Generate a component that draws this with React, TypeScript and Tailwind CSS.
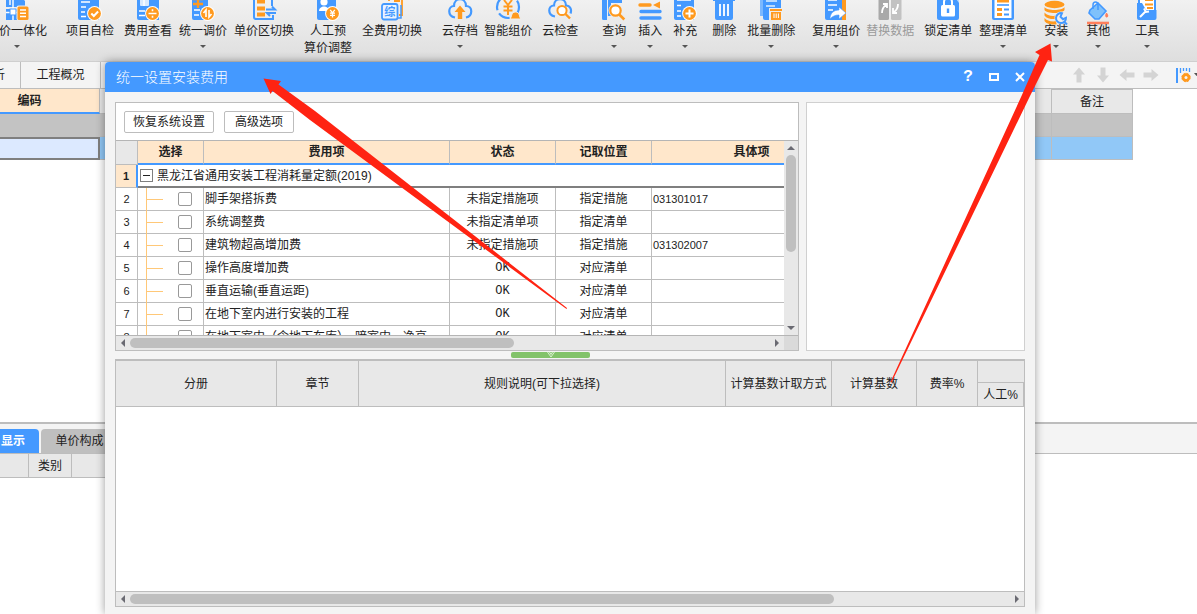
import React from 'react';

const BLUE = '#4499ff';
const ORANGE = '#ff9a1f';

function Badge({ children }: { children: React.ReactNode }) {
  return (
    <g>
      <circle cx="16.5" cy="17.5" r="7.4" fill="#fff" />
      <circle cx="16.5" cy="17.5" r="6.4" fill={ORANGE} />
      <g stroke="#fff" strokeWidth="1.6" fill="none">{children}</g>
    </g>
  );
}

const yen = 'M14.2 13.8l2.3 3 2.3-3M16.5 16.8v4.6M14 17.2h5M14 19.3h5';

const icons: Record<string, React.ReactNode> = {
  integrate: (
    <>
      <path d="M1 0h14l5 5v6H1z M1 13h15v11H1z" fill={BLUE} />
      <path d="M5 0v9M8 0v24M1 16.500h14" stroke="#fff" strokeWidth="1.400" />
      <rect x="4.500" y="12.500" width="7" height="7" fill={BLUE} />
      <rect x="5.500" y="13.500" width="5" height="5" fill="#fff" />
      <rect x="11.500" y="9.500" width="12.500" height="15" rx="2" fill="#eee" />
      <rect x="12.500" y="10.500" width="11" height="13.500" rx="1.500" fill={ORANGE} />
      <path d="M15 14h6M15 17.300h6M15 20.600h6" stroke="#fff" strokeWidth="1.500" />
    </>
  ),
  check: (
    <>
      <path d="M0 0h21v24H2a2 2 0 0 1-2-2z" fill={BLUE} />
      <path d="M3 6h9M3 11h5M3 16h4M3 20.500h5" stroke="#fff" strokeWidth="1.700" />
      <Badge><path d="M13.300 17.500l2.500 2.500 4.300-4.500" strokeWidth="2" /></Badge>
    </>
  ),
  fee: (
    <>
      <path d="M1 0h22v24H3a2 2 0 0 1-2-2z" fill={BLUE} />
      <rect x="4" y="0" width="9" height="10" rx="1" fill="#d8eaff" />
      <path d="M8 0v10M3 15h6M3 19.500h6" stroke="#fff" strokeWidth="1.500" />
      <Badge><path d="M12.500 17.500h8M16.500 13.300v2M16.500 19.700v2" /></Badge>
    </>
  ),
  adjust: (
    <>
      <path d="M1 0h16v24H3a2 2 0 0 1-2-2z" fill={BLUE} />
      <path d="M3 14h6M3 19h5" stroke="#fff" strokeWidth="1.500" />
      <path d="M2 3h10M2 8h10M7 0v12" stroke={ORANGE} strokeWidth="2.300" />
      <Badge><path d="M15 21v-7l-2.500 3M18 14v7l2.500-3" /></Badge>
    </>
  ),
  swapZone: (
    <>
      <path d="M2 0v21a2 2 0 0 0 2 2h17v-4M20 0v10" fill="none" stroke={BLUE} strokeWidth="2" />
      <path d="M5 5.500h8M5 12.500h8M5 18.500h8" stroke={ORANGE} strokeWidth="4" />
      <path d="M14 13.500h9l-3-3M24 17h-9l3 3" stroke={BLUE} strokeWidth="2" fill="none" />
    </>
  ),
  worker: (
    <>
      <path d="M1 0h19v24H3a2 2 0 0 1-2-2z" fill={BLUE} />
      <circle cx="8" cy="6" r="3.600" fill="#fff" />
      <path d="M3 15c0-6 10-6 10 0z" fill="#fff" />
      <Badge><path d={yen} strokeWidth="1.300" /></Badge>
    </>
  ),
  full: (
    <>
      <path d="M9 5V1h13v18h-3M14 5h6" fill="none" stroke={ORANGE} strokeWidth="1.800" />
      <path d="M21 9v13h-3" fill="none" stroke={BLUE} strokeWidth="1.500" />
      <rect x="2" y="8" width="15.500" height="15.500" rx="2" fill="#e9f3ff" stroke={BLUE} strokeWidth="1.800" />
      <text x="9.800" y="20" textAnchor="middle" fontSize="11" fontWeight="bold" fill={BLUE}>综</text>
    </>
  ),
  upload: (
    <>
      <path d="M7 21.500C-1 20 0 10 6 10 6 1 18 1 18 10c7 0 7 10 0 11.500" fill="none" stroke={BLUE} strokeWidth="2.200" />
      <path d="M12 9.500l5.500 6.500h-3.300v7H9.800v-7H6.500z" fill={ORANGE} />
    </>
  ),
  smart: (
    <>
      <circle cx="12" cy="11" r="11" fill="none" stroke={BLUE} strokeWidth="2.200" strokeDasharray="12 3.500" />
      <path d="M8 4l4 5 4-5M12 9v10M7.500 10.500h9M7.500 14.500h9" fill="none" stroke={ORANGE} strokeWidth="2" />
      <path d="M14 23c2-2 1-7 5.500-7s3.500 5 5.500 7z" fill={ORANGE} stroke="#eee" />
    </>
  ),
  cloudCheck: (
    <>
      <path d="M7 20.500C-1 19 0 9.500 6 9.500 6 1 18 1 18 9.500c4 0 6 4 4.500 8" fill="none" stroke={BLUE} strokeWidth="2.200" />
      <circle cx="14" cy="14.500" r="4.600" fill="#fff" stroke={ORANGE} strokeWidth="2" />
      <path d="M17.500 18l4.500 4.500" stroke={ORANGE} strokeWidth="2.400" />
    </>
  ),
  query: (
    <>
      <path d="M0 0h5v24H1.500A1.500 1.500 0 0 1 0 22.500zM6 0h14v7H9v13H6z" fill={BLUE} />
      <circle cx="13.500" cy="14.500" r="7" fill="#f0f0f0" />
      <circle cx="13.500" cy="14.500" r="5.200" fill="#fff" stroke={ORANGE} strokeWidth="2.200" />
      <path d="M17.300 18.500l5 5" stroke={ORANGE} strokeWidth="2.600" />
    </>
  ),
  insert: (
    <>
      <path d="M2 9h10" stroke={ORANGE} strokeWidth="3.400" strokeLinecap="round" />
      <path d="M15 9l7-3.500v7z" fill={ORANGE} />
      <path d="M3 15.500h19M3 22h19" stroke={BLUE} strokeWidth="3.400" strokeLinecap="round" />
    </>
  ),
  add: (
    <>
      <path d="M1 0h20v24H3a2 2 0 0 1-2-2z" fill={BLUE} />
      <path d="M4 4h14M4 9.500h4M4 15h4M4 20h4" stroke="#fff" strokeWidth="1.700" />
      <Badge><path d="M12.500 17.500h8M16.500 13.500v8" strokeWidth="2" /></Badge>
    </>
  ),
  trash: (
    <>
      <path d="M1 2h22v3H1zM3 4h18v18a2 2 0 0 1-2 2H5a2 2 0 0 1-2-2z" fill={BLUE} />
      <path d="M8 8v12M12 8v12M16 8v12" stroke="#fff" strokeWidth="1.800" />
    </>
  ),
  batchTrash: (
    <>
      <path d="M1 0h12v20H1z" fill="#7bb8ff" />
      <path d="M4 0h18v24H6a2 2 0 0 1-2-2z" fill={BLUE} />
      <path d="M7 5h11M7 10h9" stroke="#b9dbff" strokeWidth="1.800" />
      <path d="M10 12h14v12H10z" fill="#eee" />
      <path d="M11 13h12v2H11zM12 16h10v8H12z" fill={ORANGE} />
      <path d="M15 17.500v4.500M17.200 17.500v4.500M19.400 17.500v4.500" stroke="#fff" />
    </>
  ),
  reuse: (
    <>
      <path d="M14 0h8v24H9z" fill={ORANGE} />
      <path d="M1 0h17v24H3a2 2 0 0 1-2-2z" fill={BLUE} />
      <path d="M4 4h9M4 9h9M4 14h5" stroke="#fff" strokeWidth="1.700" />
      <path d="M6 23c0-6 4-9 9-9v-3l7 6-7 6v-4c-4 0-6 1-9 4z" fill="#fff" stroke={BLUE} strokeWidth=".6" />
    </>
  ),
  replace: (
    <>
      <rect x="0.500" y="-2" width="10.500" height="26" rx="1.500" fill="#a9a9a9" />
      <rect x="13" y="-2" width="10.500" height="26" rx="1.500" fill="#c2c2c2" />
      <path d="M4 17c0-4 1-6 4-8M5 8h4v4M20 8c0 4-1 6-4 8M15 12v5h4" fill="none" stroke="#fff" strokeWidth="1.800" />
    </>
  ),
  lock: (
    <>
      <path d="M1 0h22v22a2 2 0 0 1-2 2H3a2 2 0 0 1-2-2z" fill={BLUE} />
      <path d="M18 0h5v7z" fill="#b9dbff" />
      <rect x="5" y="9" width="14" height="11.500" rx="1.500" fill="#fff" />
      <path d="M8 9V6c0-5 8-5 8 0v3" fill="none" stroke="#fff" strokeWidth="2" />
      <path d="M12 12.500v4.500" stroke={BLUE} strokeWidth="2.400" />
    </>
  ),
  list: (
    <>
      <path d="M1 0h22v22a2 2 0 0 1-2 2H3a2 2 0 0 1-2-2z" fill={BLUE} />
      <path d="M3.500 0h17v22h-17z" fill="#fff" />
      <path d="M6 9h12" stroke={BLUE} strokeWidth="1.600" />
      <path d="M6 5h12M6 13.500h5M6 18.500h5" stroke={ORANGE} strokeWidth="3" />
      <path d="M13 13.500h5M13 18.500h5" stroke={BLUE} strokeWidth="2" />
    </>
  ),
  install: (
    <>
      <ellipse cx="10.500" cy="8.500" rx="10" ry="3.700" fill={ORANGE} />
      <path d="M.5 11c2 4 18 4 20 0v3c-2 4-18 4-20 0zM.5 16.500c2 3 8 4 12 3v3.500c-5 .5-10-.5-12-3.500zM.5 22c2 3 8 4 12 3v3.500c-5 .5-10-.5-12-3.500z" fill={ORANGE} />
      <circle cx="17" cy="22" r="6.500" fill="#f0f0f0" />
      <path d="M18 17.200a5 5 0 1 0 4 4.500l-3 1.500-2.500-2.500zM20.500 26l2.500 2.500" fill="none" stroke={BLUE} strokeWidth="2" />
    </>
  ),
  other: (
    <>
      <path d="M4 14L12 7l8 8-7 8H9l-6-6z" fill="#7fc1fb" stroke={BLUE} strokeWidth="1.600" />
      <path d="M7 13V9c0-4 5-4 5 0v5" fill="none" stroke={BLUE} strokeWidth="1.500" />
      <path d="M20.500 17c4 5-3 6 0 0z" fill="#ff7f5c" stroke="#ff7f5c" />
      <path d="M1 27h22" stroke="#ff7f5c" strokeWidth="2.600" />
    </>
  ),
  tool: (
    <>
      <path d="M4 0h16v15H4z" fill="#fff" stroke={BLUE} strokeWidth="2" />
      <path d="M10 4h8M10 8.500h8M12 12h6" stroke={ORANGE} strokeWidth="2.200" />
      <path d="M2 7h5l4 7h10.500V22a2 2 0 0 1-2 2H4a2 2 0 0 1-2-2z" fill={BLUE} />
      <path d="M5 21l5-5M9 12.500l2 3.500 3-.5" stroke="#fff" strokeWidth="2" fill="none" />
    </>
  ),
};

type Tool = { icon: string; label: string; second?: string; gap: string; menu?: boolean; disabled?: boolean };

const tools: Tool[] = [
  { icon: 'integrate', label: '价一体化', gap: '-ml-[13px]', menu: true },
  { icon: 'check', label: '项目自检', gap: 'ml-[19px]' },
  { icon: 'fee', label: '费用查看', gap: 'ml-[10px]' },
  { icon: 'adjust', label: '统一调价', gap: 'ml-[7px]', menu: true },
  { icon: 'swapZone', label: '单价区切换', gap: 'ml-[7px]' },
  { icon: 'worker', label: '人工预', second: '算价调整', gap: 'ml-[10px]' },
  { icon: 'full', label: '全费用切换', gap: 'ml-[10px]' },
  { icon: 'upload', label: '云存档', gap: 'ml-[20px]', menu: true },
  { icon: 'smart', label: '智能组价', gap: 'ml-[6px]' },
  { icon: 'cloudCheck', label: '云检查', gap: 'ml-[10px]' },
  { icon: 'query', label: '查询', gap: 'ml-[24px]', menu: true },
  { icon: 'insert', label: '插入', gap: 'ml-[12px]', menu: true },
  { icon: 'add', label: '补充', gap: 'ml-[11px]', menu: true },
  { icon: 'trash', label: '删除', gap: 'ml-[15px]' },
  { icon: 'batchTrash', label: '批量删除', gap: 'ml-[11px]', menu: true },
  { icon: 'reuse', label: '复用组价', gap: 'ml-[17px]', menu: true },
  { icon: 'replace', label: '替换数据', gap: 'ml-[6px]', disabled: true },
  { icon: 'lock', label: '锁定清单', gap: 'ml-[10px]' },
  { icon: 'list', label: '整理清单', gap: 'ml-[7px]', menu: true },
  { icon: 'install', label: '安装', gap: 'ml-[17px]', menu: true },
  { icon: 'other', label: '其他', gap: 'ml-[18px]', menu: true },
  { icon: 'tool', label: '工具', gap: 'ml-[25px]', menu: true },
];

function Ribbon() {
  return (
    <header className="flex h-[62px] shrink-0 items-start overflow-hidden border-b border-[#cfcfcf] bg-linear-to-b from-[#f1f1f1] to-[#dedede]">
      {tools.map((t) => (
        <button
          key={t.label}
          disabled={t.disabled}
          className={`-mt-1 flex shrink-0 flex-col items-center whitespace-nowrap text-xs leading-[17px] ${t.gap} ${t.disabled ? 'text-[#9a9a9a]' : 'text-[#222]'}`}
        >
          <svg viewBox="0 0 24 24" className="mb-[3px] size-6 overflow-visible" aria-hidden="true">{icons[t.icon]}</svg>
          <span className={t.icon === 'integrate' ? 'pl-3' : ''}>{t.label}</span>
          {t.second && <span>{t.second}</span>}
          {t.menu && (
            <svg viewBox="0 0 6 3" className="mt-[5px] h-[3px] w-[6px]" aria-hidden="true"><path d="M0 0h6L3 3z" fill="#555" /></svg>
          )}
        </button>
      ))}
    </header>
  );
}

function MoveArrow({ turn }: { turn: string }) {
  return (
    <button className="flex size-4 items-center justify-center">
      <svg viewBox="0 0 16 16" className={`size-4 ${turn}`} aria-hidden="true"><path d="M8 0.500l6 7h-3.500v8h-5v-8H2z" fill="#d4d4d4" /></svg>
    </button>
  );
}

function Workspace() {
  return (
    <main className="flex flex-1 flex-col overflow-hidden">
      <nav className="flex h-[27px] shrink-0 items-stretch border-b border-[#bdbdbd] bg-[#f4f4f4] text-xs">
        <button className="w-[21px] shrink-0 overflow-hidden border-r border-[#bdbdbd] pr-[15px]"><span className="float-right">析</span></button>
        <button className="w-20 border-r border-[#bdbdbd]">工程概况</button>
        <div className="ml-auto flex items-center gap-2">
          <MoveArrow turn="" />
          <MoveArrow turn="rotate-180" />
          <MoveArrow turn="-rotate-90" />
          <MoveArrow turn="rotate-90" />
          <button className="ml-2 flex items-center" aria-label="列设置">
            <svg viewBox="0 0 22 18" className="h-[18px] w-[22px]" aria-hidden="true">
              <path d="M2 2v15" stroke={BLUE} strokeWidth="2" />
              <path d="M5.500 2v5M8.500 2v3M11.500 2v3M14.500 2v4" stroke={BLUE} strokeWidth="1.300" />
              <circle cx="11" cy="11.500" r="4.200" fill={ORANGE} stroke={ORANGE} strokeDasharray="2.200 1.100" />
              <circle cx="11" cy="11.500" r="1.500" fill="#f4f4f4" />
              <path d="M19 7h5l-2.500 3z" fill="#555" />
            </svg>
          </button>
        </div>
      </nav>
      <table className="-ml-[40px] w-[1173px] shrink-0 table-fixed border-separate border-spacing-0 text-xs">
        <colgroup>
          <col className="w-[140px]" /><col /><col className="w-[81px]" />
        </colgroup>
        <thead>
          <tr className="h-[25px]">
            <th className="border-r border-b-2 border-r-[#bdbdbd] border-b-[#4499ff] bg-[#ffe7cb] p-0 text-[#222]">编码</th>
            <th className="border-r border-b border-[#bdbdbd] bg-[#e8e8e8] p-0" />
            <th className="border-t border-r border-b border-[#bdbdbd] bg-[#e8e8e8] p-0 font-normal">备注</th>
          </tr>
        </thead>
        <tbody>
          <tr className="h-[23px]">
            <td className="bg-[#c3c3c3] p-0" />
            <td className="border-r border-b border-[#bdbdbd] bg-[#c3c3c3] p-0" />
            <td className="border-r border-b border-[#bdbdbd] bg-[#c3c3c3] p-0" />
          </tr>
          <tr className="h-[23px]">
            <td className="border-2 border-[#7f7f7f] bg-[#dce9ff] p-0" />
            <td className="border-r border-b border-[#bdbdbd] bg-[#91c8f7] p-0" />
            <td className="border-r border-b border-[#bdbdbd] bg-[#91c8f7] p-0" />
          </tr>
        </tbody>
      </table>
      <section className="mt-auto h-[192px] shrink-0 border-t-2 border-[#bdbdbd] bg-white text-xs">
        <div className="flex h-[30px] items-end gap-0.5 border-b border-[#bdbdbd] bg-[#f4f4f4]">
          <button className="h-6 w-[39px] rounded-tr-sm bg-[#4499ff] pr-[14px] text-right font-bold text-white">显示</button>
          <button className="h-6 w-[77px] rounded-t-sm bg-[#bfbfbf] text-[#222]">单价构成</button>
        </div>
        <table className="w-[600px] table-fixed border-separate border-spacing-0">
          <thead>
            <tr className="h-6 bg-[#e8e8e8]">
              <th className="w-[29px] border-r border-b border-[#bdbdbd] p-0" />
              <th className="w-[43px] border-r border-b border-[#bdbdbd] p-0 font-normal">类别</th>
              <th className="border-b border-[#bdbdbd] p-0" />
            </tr>
          </thead>
        </table>
      </section>
    </main>
  );
}

function ScrollArrow({ turn }: { turn: string }) {
  return (
    <button className="flex size-[14px] shrink-0 items-center justify-center">
      <svg viewBox="0 0 8 4" className={`h-1 w-2 ${turn}`} aria-hidden="true"><path d="M0 0h8L4 4z" fill="#6a6a72" /></svg>
    </button>
  );
}

function HorizontalScroll({ thumb }: { thumb: string }) {
  return (
    <div className="flex h-[14px] min-w-0 flex-1 items-center bg-[#e8e8e8]">
      <ScrollArrow turn="rotate-90" />
      <div className="flex-1"><div className={`h-[10px] rounded-full bg-[#bfbfbf] ${thumb}`} /></div>
      <ScrollArrow turn="-rotate-90" />
    </div>
  );
}

const rows = [
  ['脚手架搭拆费', '未指定措施项', '指定措施', '031301017'],
  ['系统调整费', '未指定清单项', '指定清单', ''],
  ['建筑物超高增加费', '未指定措施项', '指定措施', '031302007'],
  ['操作高度增加费', 'OK', '对应清单', ''],
  ['垂直运输(垂直运距)', 'OK', '对应清单', ''],
  ['在地下室内进行安装的工程', 'OK', '对应清单', ''],
  ['在地下室内（含地下车库）、暗室内、净高', 'OK', '对应清单', ''],
];

const cell = 'border-r border-b border-[#bdbdbd] p-0';
const head = 'border-r border-b-2 border-r-[#bdbdbd] border-b-[#4499ff] bg-[#ffe7cb] p-0 font-bold';

function FeeGrid() {
  return (
    <div className="flex h-[249px] min-w-0 flex-1 flex-col border border-[#bdbdbd] bg-white">
      <div className="flex h-[37px] shrink-0 items-center gap-[10px] px-2">
        <button className="h-[22px] w-[90px] rounded-[2px] border border-[#bdbdbd]">恢复系统设置</button>
        <button className="h-[22px] w-[70px] rounded-[2px] border border-[#bdbdbd]">高级选项</button>
      </div>
      <div className="flex min-h-0 flex-1 border-y border-[#b5b5b5]">
        <div className="min-w-0 flex-1 overflow-hidden">
          <table className="w-[736px] table-fixed border-separate border-spacing-0 whitespace-nowrap">
            <colgroup>
              <col className="w-[22px]" /><col className="w-[66px]" /><col className="w-[246px]" />
              <col className="w-[106px]" /><col className="w-[96px]" /><col className="w-[200px]" />
            </colgroup>
            <thead>
              <tr className="h-6">
                <th className="border-r border-b border-[#bdbdbd] bg-[#e8e8e8] p-0" />
                <th className={head}>选择</th>
                <th className={head}>费用项</th>
                <th className={head}>状态</th>
                <th className={head}>记取位置</th>
                <th className={head}>具体项</th>
              </tr>
            </thead>
            <tbody>
              <tr className="h-[23px]">
                <th className="border-r-2 border-b border-r-[#4499ff] border-b-[#bdbdbd] bg-[#ffe7cb] p-0 text-[11px]">1</th>
                <td colSpan={5} className="border-b-2 border-[#7f7f7f] p-0">
                  <div className="flex items-center gap-1 pl-0.5">
                    <button className="flex size-[13px] items-center justify-center border border-[#7f7f7f]" aria-label="折叠">
                      <span className="h-px w-[7px] bg-[#222]" />
                    </button>
                    黑龙江省通用安装工程消耗量定额(2019)
                  </div>
                </td>
              </tr>
              {rows.map((r, i) => (
                <tr key={r[0]} className="h-[23px]">
                  <td className={`${cell} text-center text-[11px]`}>{i + 2}</td>
                  <td className={cell}>
                    <div className="flex h-[22px] items-center pl-2">
                      <span className="-mb-px w-px self-stretch bg-[#ffc878]" />
                      <span className="h-px w-4 bg-[#ffc878]" />
                      <input type="checkbox" aria-label={r[0]} className="ml-[15px] size-[14px] appearance-none rounded-[2px] border border-[#999] bg-white" />
                    </div>
                  </td>
                  <td className={`${cell} pl-px`}>{r[0]}</td>
                  <td className={`${cell} text-center ${r[1] === 'OK' ? 'font-[Liberation_Mono]' : ''}`}>{r[1]}</td>
                  <td className={`${cell} text-center`}>{r[2]}</td>
                  <td className={`${cell} pl-px text-[11px]`}>{r[3]}</td>
                </tr>
              ))}
            </tbody>
          </table>
        </div>
        <div className="flex w-[14px] shrink-0 flex-col items-center bg-[#e8e8e8]">
          <ScrollArrow turn="rotate-180" />
          <div className="flex-1"><div className="h-[97px] w-[10px] rounded-full bg-[#bfbfbf]" /></div>
          <ScrollArrow turn="" />
        </div>
      </div>
      <div className="flex h-[14px] shrink-0">
        <HorizontalScroll thumb="w-[60%]" />
        <div className="w-[14px] bg-[#dadada]" />
      </div>
    </div>
  );
}

const rule = 'border-r border-b border-[#bdbdbd] p-0 font-normal';

function RuleGrid() {
  return (
    <div className="flex min-h-0 flex-1 flex-col border border-t-2 border-[#bdbdbd] bg-white">
      <table className="w-full table-fixed border-separate border-spacing-0 bg-[#e8e8e8]">
        <colgroup>
          <col className="w-[161px]" /><col className="w-[82px]" /><col /><col className="w-[106px]" />
          <col className="w-[85px]" /><col className="w-[61px]" /><col className="w-[46px]" />
        </colgroup>
        <thead>
          <tr className="h-[22px]">
            <th rowSpan={2} className={rule}>分册</th>
            <th rowSpan={2} className={rule}>章节</th>
            <th rowSpan={2} className={rule}>规则说明(可下拉选择)</th>
            <th rowSpan={2} className={rule}>计算基数计取方式</th>
            <th rowSpan={2} className={rule}>计算基数</th>
            <th rowSpan={2} className={rule}>费率%</th>
            <th className="border-b border-[#bdbdbd] p-0" />
          </tr>
          <tr className="h-6"><th className={rule}>人工%</th></tr>
        </thead>
      </table>
      <div className="flex-1" />
      <div className="flex border-t border-[#bdbdbd]">
        <HorizontalScroll thumb="w-[80%]" />
      </div>
    </div>
  );
}

function FeeDialog() {
  return (
    <div role="dialog" aria-labelledby="dialog-title" className="absolute top-[62px] right-[162px] bottom-0 left-[105px] flex flex-col rounded-t bg-[#f4f4f4] text-xs text-[#222] shadow-[0_0_10px_rgba(0,0,0,0.4)]">
      <div className="flex h-[30px] shrink-0 items-center rounded-t bg-[#4499ff] pr-0.5 pl-[11px] text-white">
        <h1 id="dialog-title" className="mr-auto text-sm font-light">统一设置安装费用</h1>
        <button className="w-[26px] font-[Liberation_Mono] text-base font-bold">?</button>
        <button className="flex w-[26px] justify-center" aria-label="最大化"><span className="h-2 w-[10px] border-2 border-white" /></button>
        <button className="flex w-[26px] justify-center" aria-label="关闭">
          <svg viewBox="0 0 10 10" className="size-[10px]" aria-hidden="true"><path d="M1 1l8 8M9 1L1 9" stroke="#fff" strokeWidth="2" /></svg>
        </button>
      </div>
      <div className="flex min-h-0 flex-1 flex-col px-[10px] pt-[10px] pb-[7px]">
        <div className="flex shrink-0 gap-[7px]">
          <FeeGrid />
          <div className="w-[219px] border border-[#d0d0d0] bg-white" />
        </div>
        <div className="flex h-2 shrink-0 items-center pl-[396px]">
          <button className="flex h-[6px] w-[79px] items-center justify-center rounded-[2px] bg-[#82c36a]" aria-label="收起">
            <svg viewBox="0 0 8 6" className="h-[6px] w-2" aria-hidden="true"><path d="M0.500 0l3.500 5 3.500-5M2.500 0L4 2.500 5.500 0" fill="none" stroke="#d9f0d0" /></svg>
          </button>
        </div>
        <RuleGrid />
      </div>
    </div>
  );
}

export default function App() {
  return (
    <div className="relative flex h-screen min-h-[600px] flex-col overflow-hidden bg-white font-['Liberation_Sans','Noto_Sans_CJK_SC',sans-serif] text-[#222]">
      <Ribbon />
      <Workspace />
      <FeeDialog />
      <svg width="1197" height="614" className="pointer-events-none absolute top-0 left-0" aria-hidden="true">
        <g fill="#ff2312">
          <path d="M263.500 78.500L281 81l-2.500 3.500L315 111l252 197-.5 1L310 120l-37.500-29-2 3z" />
          <path d="M1050.500 43.500l1.500 18-4-1.500-18 36L891.500 382.500l-1-.5L1021.500 96l18-41-4.500-3z" />
        </g>
      </svg>
    </div>
  );
}
